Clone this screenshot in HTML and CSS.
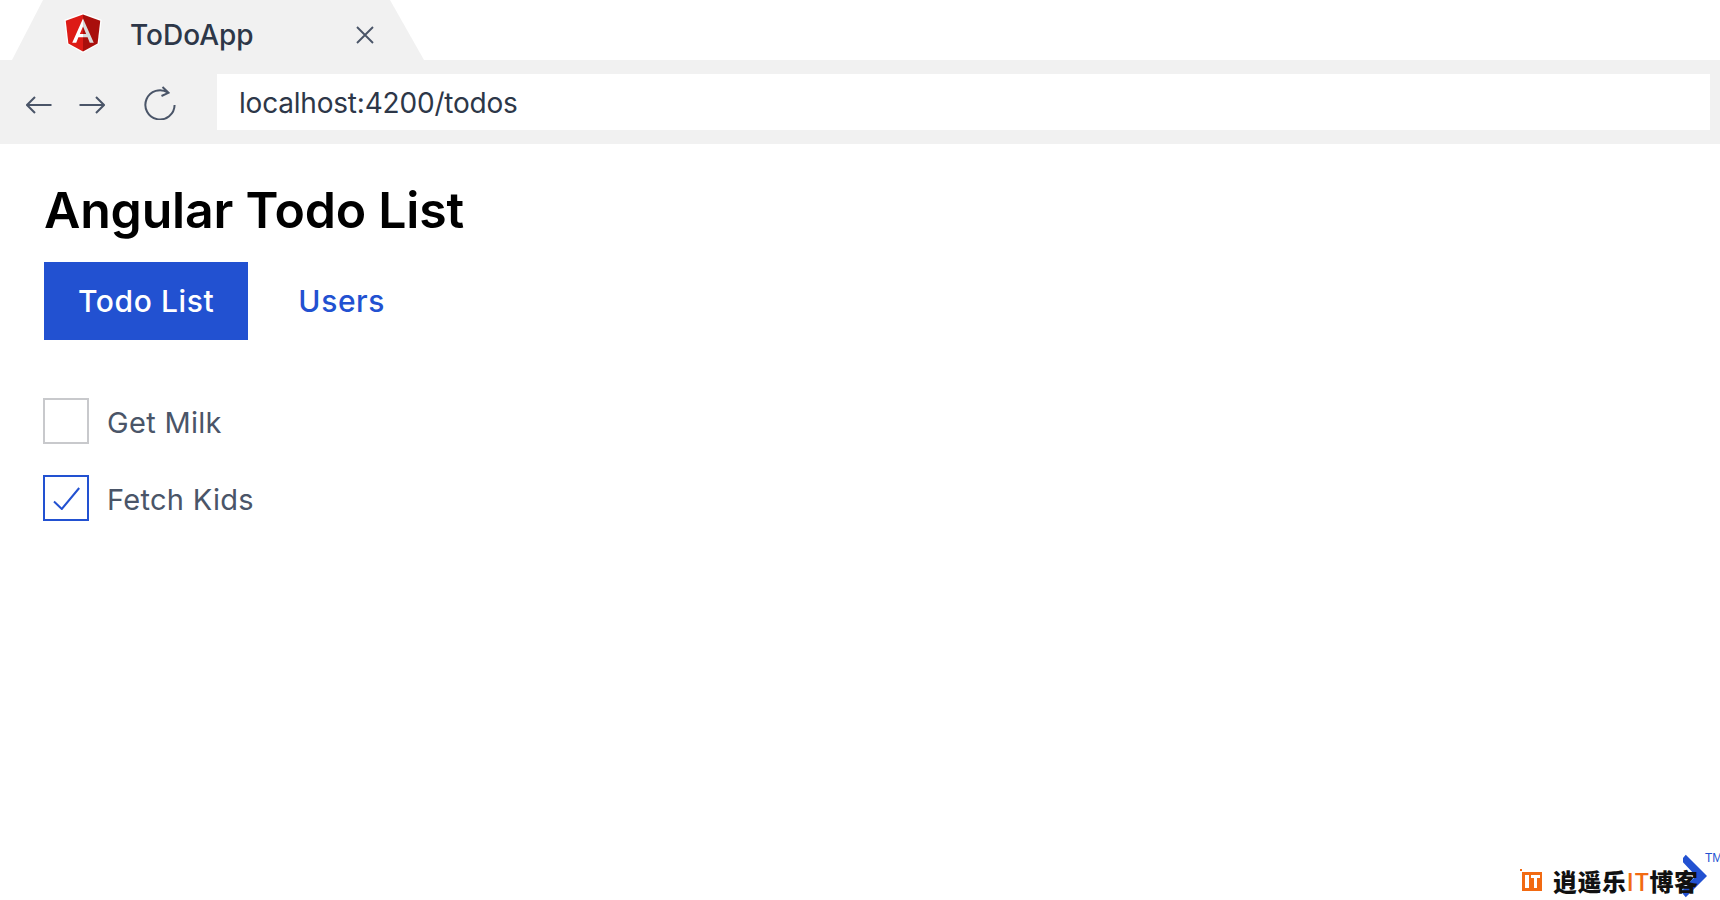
FILE: index.html
```html
<!DOCTYPE html>
<html lang="en">
<head>
<meta charset="utf-8">
<title>ToDoApp</title>
<link rel="stylesheet" href="styles.css">
</head>
<body>
<header class="browser">
  <div class="tabstrip">
    <div class="tab">
      <svg class="favicon" viewBox="24 22 202 216" aria-hidden="true">
        <polygon points="125,22 24,58 40,190 125,238 210,190 226,58" fill="#fff"/>
        <polygon points="125,30 31.9,63.2 46.1,186.3 125,230" fill="#dd1b16"/>
        <polygon points="125,30 125,230 203.9,186.3 218.1,63.2" fill="#a90f0c"/>
        <path d="M125 52.1 66.8 182.6h21.7l11.7-29.2H125v-18h-17l17-40.9z" fill="#fff"/>
        <path d="M125 52.1 183.2 182.6h-21.7l-11.7-29.2H125v-18h17l-17-40.9z" fill="#d9d9d9"/>
      </svg>
      <span class="tab-title">ToDoApp</span>
      <svg class="tab-close" viewBox="0 0 18 18" aria-hidden="true">
        <path d="M1 1 17 17M17 1 1 17"/>
      </svg>
    </div>
  </div>
  <div class="toolbar">
    <svg class="icon icon-arrow" viewBox="0 0 26 18" aria-hidden="true"><path d="M25.5 9H1M9 1 1 9l8 8"/></svg>
    <svg class="icon icon-arrow icon-forward" viewBox="0 0 26 18" aria-hidden="true"><path d="M.5 9H25M17 1l8 8-8 8"/></svg>
    <svg class="icon icon-reload" viewBox="0 0 32 34" aria-hidden="true"><path d="M24 6.6A14.6 14.6 0 1 0 30.6 19M18.5 1 24.5 6.8 17.5 10"/></svg>
    <div class="address">localhost:4200/todos</div>
  </div>
</header>
<main class="app">
  <h1 class="app-title">Angular Todo List</h1>
  <nav class="app-nav">
    <a class="nav-link is-active" href="#">Todo List</a>
    <a class="nav-link" href="#">Users</a>
  </nav>
  <ul class="todos">
    <li class="todo">
      <span class="box"></span>
      <span class="todo-label">Get Milk</span>
    </li>
    <li class="todo">
      <span class="box is-checked">
        <svg class="check" viewBox="0 0 27 23" aria-hidden="true"><path d="M1 14.5 8.8 22 26.2 1"/></svg>
      </span>
      <span class="todo-label">Fetch Kids</span>
    </li>
  </ul>
</main>
<div class="watermark">
  <svg class="wm-arrow" viewBox="0 0 26 46" aria-hidden="true"><path d="M3 0 26 23 3 46-2 40 14 23-2 6z"/></svg>
  <svg class="wm-logo" viewBox="0 0 22 22" aria-hidden="true"><path d="M0 0h2v2H0zM2 3h20v19H2zM5 6v13h4V6zM11 6v3h3v10h3V9h3V6z" fill-rule="evenodd"/></svg>
  <span class="wm-text">逍遥乐<em>IT</em>博客</span>
  <span class="wm-tm">TM</span>
</div>
</body>
</html>
```
FILE: styles.css
```css
* { box-sizing: border-box; }
html, body { margin: 0; padding: 0; background: #fff; }
body {
  height: 900px;
  overflow: hidden;
  position: relative;
  font-family: Inter, Lato, sans-serif;
}

.tabstrip { height: 60px; display: flex; padding-left: 12px; }
.tab {
  width: 412px;
  height: 60px;
  background: #f1f1f1;
  clip-path: polygon(31px 0, 378px 0, 100% 100%, 0 100%);
  display: flex;
  align-items: center;
  padding-left: 52px;
}
.favicon { width: 38px; height: 40px; flex: none; margin-top: 6px; }
.tab-title { margin-left: 28px; font-size: 28px; font-weight: 500; letter-spacing: 0; color: #2d3748; width: 226px; margin-top: 9px; }
.tab-close { width: 18px; height: 18px; fill: none; stroke: #4a5568; stroke-width: 1.9; margin-top: 9px; }

.toolbar {
  height: 84px;
  background: #f1f1f1;
  display: flex;
  align-items: center;
  padding: 0 10px 0 26px;
}
.icon { fill: none; stroke: #4a5568; stroke-width: 2; flex: none; }
.icon-arrow { width: 26px; height: 18px; margin-top: 6px; }
.icon-forward { margin-left: 27px; }
.icon-reload { width: 32px; height: 34px; margin-left: 39px; margin-top: 1px; }
.address {
  flex: 1;
  height: 56px;
  margin-left: 41px;
  background: #fff;
  padding: 1px 0 0 22px;
  font-size: 28px;
  font-weight: 400;
  letter-spacing: -0.2px;
  line-height: 56px;
  color: #2d3748;
}

.app { padding: 32px 44px 0; }
.app-title { margin: 0; font-size: 50px; line-height: 68px; font-weight: 600; letter-spacing: -0.2px; color: #000; }
.app-nav { display: flex; margin-top: 18px; }
.nav-link {
  display: block;
  height: 78px;
  line-height: 78px;
  padding: 0 34px;
  font-size: 30px;
  font-weight: 500;
  letter-spacing: 0.6px;
  color: #2251d1;
  text-decoration: none;
  margin-right: 16px;
}
.nav-link.is-active { background: #2251d1; color: #fff; }

.todos { list-style: none; margin: 58px 0 0; padding: 0; }
.todo { display: flex; align-items: center; height: 46px; margin-bottom: 31px; margin-left: -1px; }
.box {
  width: 46px;
  height: 46px;
  border: 2px solid #c8c9cc;
  display: flex;
  align-items: center;
  justify-content: center;
  flex: none;
}
.box.is-checked { border-color: #2251d1; }
.check { width: 27px; height: 23px; fill: none; stroke: #2251d1; stroke-width: 2; }
.todo-label { margin-left: 18px; padding-top: 2px; font-size: 29px; letter-spacing: 0.3px; color: #4a5568; }

.watermark { position: absolute; left: 1520px; top: 850px; width: 200px; height: 50px; }
.wm-arrow { position: absolute; left: 163px; top: 3px; width: 24px; height: 46px; fill: #2251d1; }
.wm-logo { position: absolute; left: 0; top: 19px; width: 22px; height: 22px; fill: #f26a12; }
.wm-text {
  position: absolute;
  left: 33px;
  top: 13px;
  font-family: "Noto Sans CJK SC", sans-serif;
  font-size: 24px;
  letter-spacing: 0.5px;
  line-height: 36px;
  font-weight: 900;
  color: #111;
  white-space: nowrap;
}
.wm-text em { font-style: normal; color: #f26a12; font-weight: 500; }
.wm-tm { position: absolute; left: 185px; top: 1px; font-size: 12px; line-height: 14px; color: #2251d1; font-family: "Liberation Sans", sans-serif; }
```
